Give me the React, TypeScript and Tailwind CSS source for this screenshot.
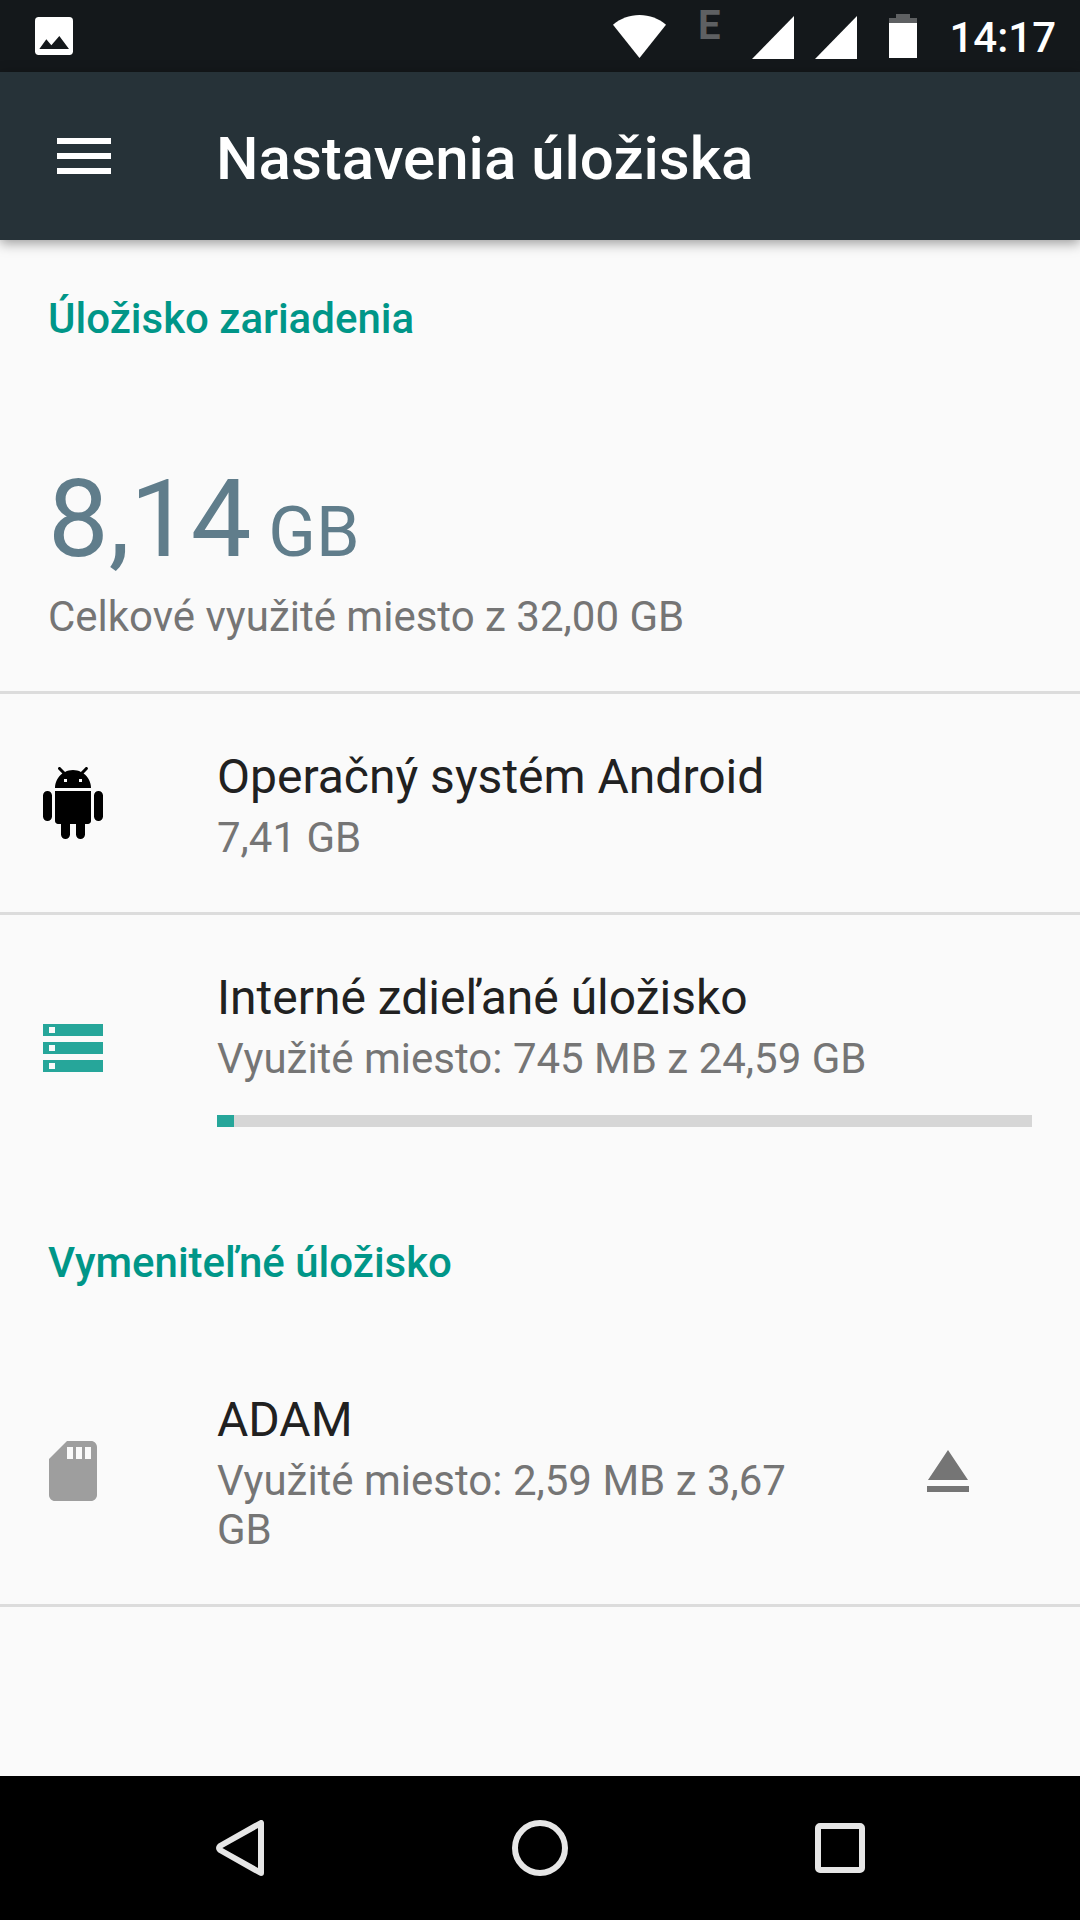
import type { ReactNode } from 'react';
import { MdEject, MdMenu, MdStorage } from 'react-icons/md';

function ImageIcon() {
  return (
    <svg className="h-[38px] w-[38px]" viewBox="0 0 114 114">
      <rect width="114" height="114" rx="11" fill="#fff" />
      <path d="M13 96 34 67 49 85 73 57 102 96z" fill="#14181b" />
    </svg>
  );
}

function WifiIcon() {
  return (
    <svg className="h-[43px] w-[53px]" viewBox="0 0 159 129" fill="#fff">
      <path d="M79.500 129 0 29C22 11 49 0 79.500 0S137 11 159 29z" />
    </svg>
  );
}

function SignalIcon() {
  return (
    <svg className="h-[43px] w-[42px]" viewBox="0 0 42 43" fill="#fff">
      <path d="M42 0v43H0z" />
    </svg>
  );
}

function BatteryIcon() {
  return (
    <svg className="h-[44px] w-[28px]" viewBox="0 0 28 44">
      <path d="M7 0h14v4h7v5H0V4h7z" fill="#5e6062" />
      <path d="M0 9h28v35H0z" fill="#fff" />
    </svg>
  );
}

function AndroidIcon() {
  return (
    <svg className="h-18 w-18" viewBox="0 0 24 24" fill="#000">
      <path d="M6 18c0 .55.45 1 1 1h1v3.500c0 .83.67 1.500 1.500 1.500s1.500-.67 1.500-1.500V19h2v3.500c0 .83.67 1.500 1.500 1.500s1.500-.67 1.500-1.500V19h1c.55 0 1-.45 1-1V8H6v10zM3.500 8C2.670 8 2 8.670 2 9.500v7c0 .83.67 1.500 1.500 1.500S5 17.330 5 16.500v-7C5 8.670 4.330 8 3.500 8zm17 0c-.83 0-1.500.67-1.500 1.500v7c0 .83.67 1.500 1.500 1.500s1.500-.67 1.500-1.500v-7c0-.83-.67-1.500-1.500-1.500zm-4.970-5.840l1.300-1.300c.2-.2.2-.51 0-.71-.2-.2-.51-.2-.71 0l-1.480 1.480C13.850 1.230 12.950 1 12 1c-.96 0-1.860.23-2.660.63L7.850.15c-.2-.2-.51-.2-.71 0-.2.2-.2.51 0 .71l1.310 1.310C6.970 3.260 6 5.010 6 7h12c0-1.990-.97-3.750-2.470-4.840zM10 5H9V4h1v1zm5 0h-1V4h1v1z" />
    </svg>
  );
}

function SdCardIcon() {
  return (
    <svg className="h-18 w-18" viewBox="0 0 24 24" fill="#9e9e9e">
      <path d="M18 2h-8L4 8v12c0 1.100.9 2 2 2h12c1.100 0 2-.9 2-2V4c0-1.100-.9-2-2-2zm-6 6h-2V4h2v4zm3 0h-2V4h2v4zm3 0h-2V4h2v4z" />
    </svg>
  );
}

function StatusBar() {
  return (
    <div className="flex h-[72px] items-center bg-[#14181b] pr-6 pl-[35px] text-white">
      <ImageIcon />
      <div className="ml-auto flex items-center">
        <WifiIcon />
        <span className="mr-8 mb-5 ml-8 text-[40px] leading-10 font-bold text-[#5e6062]">E</span>
        <div className="mr-8 flex gap-[21px] pt-0.5">
          <SignalIcon />
          <SignalIcon />
        </div>
        <BatteryIcon />
        <span className="ml-8 pt-0.5 text-[42px] leading-[49px] font-medium">14:17</span>
      </div>
    </div>
  );
}

function SectionTitle({ children }: { children: ReactNode }) {
  return (
    <h2 className="px-12 pt-[54px] pb-[50px] text-[42px] leading-[49px] font-medium text-[#009688]">{children}</h2>
  );
}

type VolumeProps = {
  icon: ReactNode;
  name: string;
  summary: string;
  usedPercent?: number;
  action?: ReactNode;
  divider?: boolean;
};

function Volume({ icon, name, summary, usedPercent, action, divider = true }: VolumeProps) {
  return (
    <li className={`flex items-center border-b-[3px] ${divider ? 'border-[#dcdcdc]' : 'border-transparent'}`}>
      <button type="button" className="flex min-w-0 flex-1 items-center gap-[108px] pr-12 pl-[37px] text-left">
        <span className="shrink-0">{icon}</span>
        <span className="min-w-0 flex-1 pt-[55px] pb-[50px]">
          <span className="block text-[48px] leading-[56px] text-[#212121]">{name}</span>
          <span className="mt-2 block text-[42px] leading-[49px] text-[#757575]">{summary}</span>
          {usedPercent !== undefined && (
            <span
              role="progressbar"
              aria-label={name}
              aria-valuenow={usedPercent}
              className="mt-8 mb-1 block h-3 bg-[#d6d6d6]"
            >
              <span className="block h-full bg-[#26a69a]" style={{ width: `${usedPercent}%` }} />
            </span>
          )}
        </span>
      </button>
      {action}
    </li>
  );
}

function NavBar() {
  return (
    <nav className="mt-auto flex h-36 bg-black px-[90px]">
      <button type="button" aria-label="Späť" className="flex flex-1 items-center justify-center">
        <svg className="h-14 w-12" viewBox="0 0 48 56" fill="none" stroke="#e6e6e6" strokeWidth="6" strokeLinejoin="round">
          <path d="M45 3v50L4 30Q2 28 4 26z" />
        </svg>
      </button>
      <button type="button" aria-label="Domov" className="flex flex-1 items-center justify-center">
        <svg className="h-14 w-14" viewBox="0 0 56 56" fill="none" stroke="#e6e6e6" strokeWidth="6">
          <circle cx="28" cy="28" r="25" />
        </svg>
      </button>
      <button type="button" aria-label="Prehľad" className="flex flex-1 items-center justify-center">
        <svg className="h-[50px] w-[50px]" viewBox="0 0 50 50" fill="none" stroke="#e6e6e6" strokeWidth="6">
          <rect x="3" y="3" width="44" height="44" rx="2" />
        </svg>
      </button>
    </nav>
  );
}

export default function App() {
  return (
    <div className="flex min-h-screen flex-col bg-[#fafafa] font-['Roboto',sans-serif]">
      <StatusBar />
      <header className="flex h-[168px] items-center gap-24 bg-[#263238] px-12 text-white shadow-[0_3px_12px_rgba(0,0,0,0.4)]">
        <button type="button" aria-label="Menu">
          <MdMenu className="h-18 w-18" />
        </button>
        <h1 className="pt-1.5 text-[60px] leading-[70px] font-medium">Nastavenia úložiska</h1>
      </header>

      <main>
        <SectionTitle>Úložisko zariadenia</SectionTitle>
        <div className="border-b-[3px] border-[#dcdcdc] px-12 pt-[54px] pb-[50px]">
          <p className="flex items-baseline gap-[17px] text-[108px] leading-[145px] text-[#607d8b]">
            <span>8,14</span>
            <span className="text-[70px] leading-[82px]">GB</span>
          </p>
          <p className="text-[42px] leading-[49px] text-[#757575]">Celkové využité miesto z 32,00 GB</p>
        </div>
        <ul>
          <Volume icon={<AndroidIcon />} name="Operačný systém Android" summary="7,41 GB" />
          <Volume
            icon={<MdStorage className="h-18 w-18 text-[#26a69a]" />}
            name="Interné zdieľané úložisko"
            summary="Využité miesto: 745 MB z 24,59 GB"
            usedPercent={2.1}
            divider={false}
          />
        </ul>

        <SectionTitle>Vymeniteľné úložisko</SectionTitle>
        <ul>
          <Volume
            icon={<SdCardIcon />}
            name="ADAM"
            summary="Využité miesto: 2,59 MB z 3,67 GB"
            action={
              <button type="button" aria-label="Odpojiť" className="mr-12 px-12 text-[#757575]">
                <MdEject className="h-18 w-18" />
              </button>
            }
          />
        </ul>
      </main>
      <NavBar />
    </div>
  );
}
